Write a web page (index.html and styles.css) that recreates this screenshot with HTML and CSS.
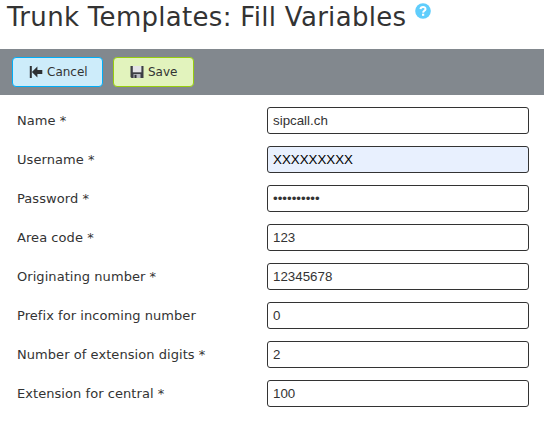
FILE: index.html
```html
<!DOCTYPE html>
<html lang="en">
<head>
<meta charset="utf-8">
<title>Trunk Templates: Fill Variables</title>
<link rel="stylesheet" href="styles.css">
</head>
<body>
<header class="heading">
  <h1>Trunk Templates: Fill Variables</h1>
  <svg class="help" width="16" height="16" viewBox="0 0 16 16"><circle cx="8" cy="8" r="7.8" fill="#5fcdfc"/><path d="M5.5 6.1C5.7 3.3 10.6 3.2 10.5 6.1C10.4 7.7 8.2 7.8 8.1 9.6" fill="none" stroke="#fff" stroke-width="2"/><rect x="7" y="10.7" width="2.2" height="2.1" fill="#fff"/></svg>
</header>
<div class="toolbar">
  <button class="btn cancel" type="button">
    <svg width="14" height="14" viewBox="0 0 14 14"><path d="M0.8 1h2v12h-2zM2.9 7l5.5-5.5V5H13.3v4H8.4v3.5z" fill="#2d3033"/></svg>
    <span>Cancel</span>
  </button>
  <button class="btn save" type="button">
    <svg width="14" height="14" viewBox="0 0 14 14"><path d="M0.5 1h13v12H1.5l-1-1z" fill="#3c3e44"/><path d="M2.8 1h8.6v6.3H2.8z" fill="#e4e4e6"/><path d="M3.5 9h7V13h-7z" fill="#b9bbc0"/><path d="M4.5 9.8h2V13h-2z" fill="#303238"/></svg>
    <span>Save</span>
  </button>
</div>
<form class="fields">
  <label for="name">Name *</label><input id="name" type="text" value="sipcall.ch">
  <label for="user">Username *</label><input id="user" class="autofilled" type="text" value="XXXXXXXXX">
  <label for="pass">Password *</label><input id="pass" type="password" value="0123456789">
  <label for="area">Area code *</label><input id="area" type="text" value="123">
  <label for="orig">Originating number *</label><input id="orig" type="text" value="12345678">
  <label for="prefix">Prefix for incoming number</label><input id="prefix" type="text" value="0">
  <label for="digits">Number of extension digits *</label><input id="digits" type="text" value="2">
  <label for="central">Extension for central *</label><input id="central" type="text" value="100">
</form>
</body>
</html>
```
FILE: styles.css
```css
* { box-sizing: border-box; }
body {
  margin: 0;
  background: #fff;
  color: #333;
  font-family: "DejaVu Sans", sans-serif;
  overflow: hidden;
}
.heading {
  display: flex;
  height: 49px;
  padding: 0 0 0 7px;
}
h1 {
  margin: 0;
  font-size: 26px;
  font-weight: 400;
  line-height: 35px;
  letter-spacing: 0.3px;
  white-space: nowrap;
}
.help { margin: 3px 0 0 9px; }
.toolbar {
  display: flex;
  gap: 10px;
  height: 46px;
  padding: 8px 12px;
  background: #82888e;
}
.btn {
  display: flex;
  align-items: center;
  height: 30px;
  padding: 0 15px;
  border: 1px solid #00adf7;
  border-radius: 4px;
  color: #333;
  font: 12px "DejaVu Sans", sans-serif;
  white-space: nowrap;
}
.btn svg { flex: none; margin-right: 4px; }
.btn span { line-height: 14px; }
.cancel { width: 91px; padding-left: 16px; background: #cdecfa; }
.save { width: 81px; background: #e2f3bd; border-color: #97cd0f; padding-left: 16px; }
.fields {
  display: grid;
  grid-template-columns: 250px 262px;
  row-gap: 12px;
  padding: 12px 0 0 17px;
}
.fields label {
  font-size: 13px;
  line-height: 27px;
  letter-spacing: 0.06px;
  white-space: nowrap;
}
.fields input {
  width: 262px;
  height: 27px;
  padding: 0 5px;
  border: 1px solid #333;
  border-radius: 3px;
  background: #fff;
  color: #333;
  font: 13.333px "Liberation Sans", sans-serif;
}
.fields .autofilled { background: #e8f0fe; color: #000; }
```
